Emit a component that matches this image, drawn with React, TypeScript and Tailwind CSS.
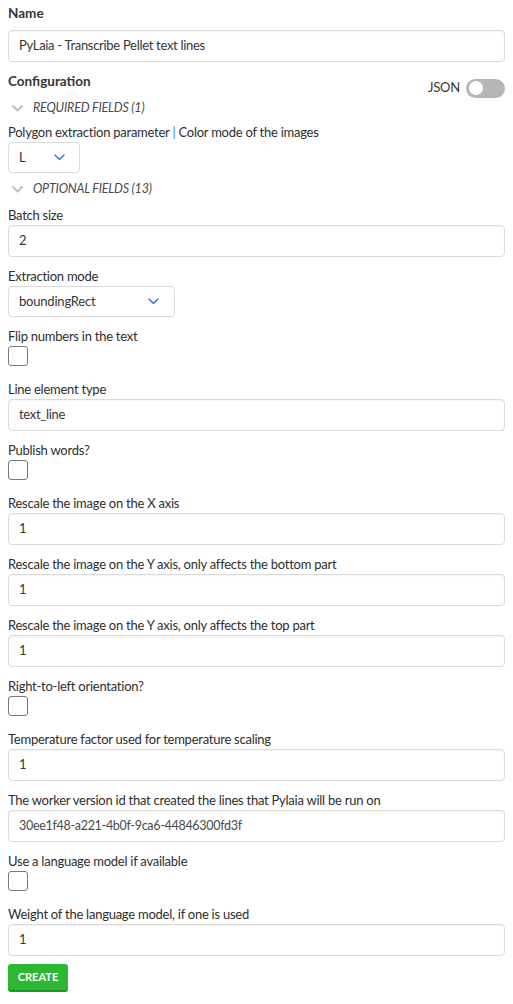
// Imports
import React from "react";

// Shared styles
const inputCls =
    "w-full h-[32px] rounded-[4px] border border-[#dbdbdb] bg-white px-[10px] text-[13px] tracking-[-0.3px] text-[#363636] shadow-[inset_0_1px_2px_rgba(10,10,10,0.05)] outline-none";

// Chevron used in selects
function SelectChevron() {
    return (
        <svg width="11" height="7" viewBox="0 0 11 7" fill="none">
            <path d="M1 1l4.5 4.5L10 1" stroke="#3e7fd6" strokeWidth="1.6" strokeLinecap="round" strokeLinejoin="round" />
        </svg>
    );
}

// Section header (REQUIRED / OPTIONAL)
function SectionToggle({ text }: { text: string }) {
    return (
        <div className="flex items-center h-[20px] gap-[10px] pl-[4px]">
            <svg width="11" height="7" viewBox="0 0 11 7" fill="none">
                <path d="M1 1l4.5 4.5L10 1" stroke="#c2c2c2" strokeWidth="2.2" strokeLinecap="round" strokeLinejoin="round" />
            </svg>
            <span className="italic text-[12.5px] tracking-[-0.2px] text-[#4a4a4a] uppercase">{text}</span>
        </div>
    );
}

function Label({ children }: { children: React.ReactNode }) {
    return <div className="h-[20px] leading-[20px] text-[13px] tracking-[-0.25px] text-[#2e2e2e]">{children}</div>;
}

function TextField({ label, value, small }: { label: string; value: string; small?: boolean }) {
    return (
        <div className="mb-[9px]">
            <Label>{label}</Label>
            <div className={inputCls + " flex items-center"}>
                <span className={small ? "text-[12.5px] text-[#4a4a4a]" : ""}>{value}</span>
            </div>
        </div>
    );
}

function CheckField({ label }: { label: string }) {
    return (
        <div className="mb-[10px]">
            <Label>{label}</Label>
            <div className="h-[23px]">
                <div className="w-[20px] h-[20px] rounded-[3px] border border-[#7a7a7a] bg-white" />
            </div>
        </div>
    );
}

export default function App() {
    return (
        <section className="w-[513px] min-h-[1004px] bg-white px-[8px] pt-[3px] text-[#363636]" style={{ fontFamily: "Lato, 'Liberation Sans', sans-serif" }}>
            {/* Name */}
            <div className="h-[20px] leading-[20px] text-[13.5px] font-bold text-[#363636]">Name</div>
            <div className={inputCls + " mt-[7px] flex items-center"}>PyLaia - Transcribe Pellet text lines</div>

            {/* Configuration header */}
            <div className="flex justify-between items-start h-[20px] mt-[9px]">
                <div className="h-[20px] leading-[20px] text-[13.5px] font-bold">Configuration</div>
                <div className="flex items-center gap-[6px] h-[20px] translate-y-[7px]">
                    <span className="text-[13px] tracking-[-0.2px] text-[#363636]">JSON</span>
                    <div className="w-[39px] h-[19px] rounded-full bg-[#b5b5b5] flex items-center px-[3px]">
                        <div className="w-[14px] h-[14px] rounded-full bg-white" />
                    </div>
                </div>
            </div>
            <div className="mt-[7px]">
                <SectionToggle text="Required fields (1)" />
            </div>

            {/* Required */}
            <div className="mt-[4px]">
                <Label>
                    Polygon extraction parameter <span className="text-[#3e7fd6]">|</span> Color mode of the images
                </Label>
                <div className="w-[72px] h-[31px] rounded-[4px] border border-[#dbdbdb] bg-white flex items-center justify-between pl-[10px] pr-[14px] text-[13px]">
                    <span>L</span>
                    <SelectChevron />
                </div>
            </div>

            <div className="mt-[6px]">
                <SectionToggle text="Optional fields (13)" />
            </div>

            {/* Optional */}
            <div className="mt-[6px]">
                <TextField label="Batch size" value="2" />
                <div className="mb-[9px]">
                    <Label>Extraction mode</Label>
                    <div className="w-[167px] h-[31px] rounded-[4px] border border-[#dbdbdb] bg-white flex items-center justify-between pl-[10px] pr-[15px] text-[13px] tracking-[-0.2px]">
                        <span>boundingRect</span>
                        <SelectChevron />
                    </div>
                </div>
                <CheckField label="Flip numbers in the text" />
                <TextField label="Line element type" value="text_line" />
                <CheckField label="Publish words?" />
                <TextField label="Rescale the image on the X axis" value="1" />
                <TextField label="Rescale the image on the Y axis, only affects the bottom part" value="1" />
                <TextField label="Rescale the image on the Y axis, only affects the top part" value="1" />
                <CheckField label="Right-to-left orientation?" />
                <TextField label="Temperature factor used for temperature scaling" value="1" />
                <TextField label="The worker version id that created the lines that Pylaia will be run on" value="30ee1f48-a221-4b0f-9ca6-44846300fd3f" small />
                <CheckField label="Use a language model if available" />
                <div>
                    <Label>Weight of the language model, if one is used</Label>
                    <div className={inputCls + " flex items-center"}>1</div>
                </div>
            </div>

            {/* Create */}
            <button className="mt-[8px] w-[60px] h-[28px] rounded-[3px] bg-[#2cb832] border-b-2 border-[#23962a] text-white text-[11px] font-bold uppercase">
                Create
            </button>
        </section>
    );
}
